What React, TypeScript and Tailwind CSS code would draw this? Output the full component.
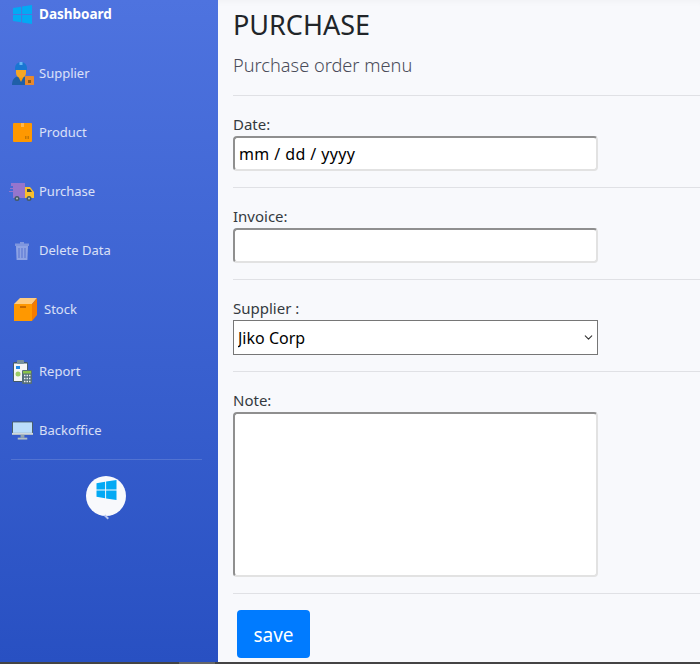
import { ChevronDown } from "lucide-react";

const sans = "font-['Noto_Sans','Liberation_Sans',sans-serif]";

function WinLogo({ className }: { className?: string }) {
  return (
    <svg viewBox="0 0 20 20" className={className} fill="#03a9f4">
      <path d="M0 3.2 8.6 1.8v7.6H0zM9.6 1.6 20 0v9.4H9.6zM0 10.4h8.6v7.8L0 16.8zM9.6 10.4H20V20L9.6 18.4z" />
    </svg>
  );
}

function SupplierIcon() {
  return (
    <svg viewBox="0 0 22 23" className="w-[22px] h-[23px]">
      <path d="M0 23c0-6 3-9 9-9s9 3 9 9z" fill="#1f5fa8" />
      <path d="M6 14h6l-3 6z" fill="#f59e0b" />
      <path d="M4 8h10v3a5 5 0 0 1-10 0z" fill="#f5a623" />
      <path d="M3 8V6a6 6 0 0 1 12 0v2z" fill="#1976d2" />
      <rect x="7.5" y="0" width="3" height="3" fill="#64b5f6" />
      <rect x="13" y="14" width="9" height="9" rx=".5" fill="#e8892c" />
      <rect x="16" y="18" width="3" height="3" fill="#8a5a1c" />
    </svg>
  );
}

function BoxIcon() {
  return (
    <svg viewBox="0 0 19 19" className="w-[19px] h-[19px]">
      <rect width="19" height="19" rx="1" fill="#ff9800" />
      <rect x="8" y="0" width="3" height="4" fill="#ffb74d" />
      <rect x="12" y="13" width="1.5" height="3" fill="#c77700" />
      <rect x="14.5" y="13" width="1.5" height="3" fill="#c77700" />
    </svg>
  );
}

function TruckIcon() {
  return (
    <svg viewBox="0 0 26 20" className="w-[26px] h-5">
      <path d="M2 1h14v15H4V10H0V9h4V7H1V6h3V4H2z" fill="#9575cd" />
      <path d="M16 5h5l4 5v6h-9z" fill="#fbc02d" />
      <path d="M18 7h3l2 3h-5z" fill="#37474f" />
      <circle cx="8" cy="16.5" r="2.5" fill="#455a64" />
      <circle cx="20" cy="16.5" r="2.5" fill="#455a64" />
      <circle cx="8" cy="16.5" r="1" fill="#b0bec5" />
      <circle cx="20" cy="16.5" r="1" fill="#b0bec5" />
    </svg>
  );
}

function TrashIcon() {
  return (
    <svg viewBox="0 0 14 18" className="w-3.5 h-[18px]">
      <path d="M5 0h4v1.5h5V4H0V1.5h5z" fill="#7f96de" />
      <path d="M1 4h12l-.6 14H1.6z" fill="#8ea3e4" />
      <path d="M4 6v10M7 6v10M10 6v10" stroke="#5f7bd4" strokeWidth="1.2" />
    </svg>
  );
}

function StockIcon() {
  return (
    <svg viewBox="0 0 23 23" className="w-[23px] h-[23px]">
      <path d="M0 6 6 0h17l-5 6z" fill="#ffcc80" />
      <rect y="6" width="18" height="17" fill="#ff9800" />
      <path d="M18 6l5-6v17l-5 6z" fill="#f57c00" />
      <rect x="6" y="8" width="6" height="2" fill="#c66900" />
    </svg>
  );
}

function ReportIcon() {
  return (
    <svg viewBox="0 0 19 24" className="w-[19px] h-6">
      <rect y="2" width="15" height="20" rx="1.5" fill="#455a64" />
      <rect x="1" y="3.5" width="13" height="17.5" fill="#f5f5f5" />
      <rect x="4" y="0" width="7" height="4" rx="1" fill="#78909c" />
      <rect x="3" y="6" width="4" height="3" fill="#1e88e5" />
      <circle cx="5" cy="14" r="2.5" fill="#9ccc65" />
      <rect x="9" y="10" width="10" height="14" rx="1" fill="#546e7a" />
      <rect x="10" y="11" width="8" height="2.5" fill="#8bc34a" />
      <path d="M11 15.5h1.5M13.5 15.5H15M16 15.5h1.5M11 18.5h1.5M13.5 18.5H15M16 18.5h1.5M11 21.5h1.5M13.5 21.5H15M16 21.5h1.5" stroke="#eceff1" strokeWidth="1.5" />
    </svg>
  );
}

function MonitorIcon() {
  return (
    <svg viewBox="0 0 22 19" className="w-[21px] h-[19px]">
      <rect width="22" height="14" rx="1" fill="#455a64" />
      <rect x="1" y="1" width="20" height="11" fill="#bbdefb" />
      <rect y="12" width="22" height="2" fill="#cfd8dc" />
      <rect x="9" y="14" width="4" height="3" fill="#90a4ae" />
      <rect x="6" y="17" width="10" height="2" fill="#b0bec5" />
    </svg>
  );
}

const navItems = [
  { label: "Dashboard", icon: <WinLogo className="w-[19px] h-[19px]" />, row: "h-[29px]", iconBox: "w-[39px] pr-[7px]", active: true },
  { label: "Supplier", icon: <SupplierIcon />, row: "h-[59px] mt-[15px]", iconBox: "w-[39px] pr-[5px]" },
  { label: "Product", icon: <BoxIcon />, row: "h-[59px]", iconBox: "w-[39px] pr-[7px]" },
  { label: "Purchase", icon: <TruckIcon />, row: "h-[59px]", iconBox: "w-[39px] pr-1" },
  { label: "Delete Data", icon: <TrashIcon />, row: "h-[59px]", iconBox: "w-[39px] pr-2.5" },
  { label: "Stock", icon: <StockIcon />, row: "h-[59px]", iconBox: "w-[44px] pr-[7px]" },
  { label: "Report", icon: <ReportIcon />, row: "h-[59px] mt-[3px]", iconBox: "w-[39px] pr-[7px]" },
  { label: "Backoffice", icon: <MonitorIcon />, row: "h-[59px] mb-[-1px]", iconBox: "w-[39px] pr-1.5" },
];

function Sidebar() {
  return (
    <aside className="w-[218px] shrink-0 bg-gradient-to-b from-[#4e73df] to-[#2850c2] flex flex-col">
      <nav className="flex flex-col">
        {navItems.map((item) => (
          <a key={item.label} className={`flex items-center ${item.row}`}>
            <span className={`${item.iconBox} shrink-0 flex justify-end`}>{item.icon}</span>
            <span className={item.active ? "text-[13.5px] font-bold text-white" : "text-[13px] text-white/80"}>
              {item.label}
            </span>
          </a>
        ))}
      </nav>
      <div className="ml-[11px] mr-4">
        <hr className="border-0 border-t border-white/15" />
        <div className="flex justify-center mt-4 pr-0.5">
          <div className="relative w-10 h-10 rounded-full bg-[#f8f9fc] flex justify-center pt-1 pl-0.5">
            <WinLogo className="w-[21px] h-5" />
            <span className="absolute left-[18px] top-[40px] w-[5px] h-[2px] rotate-45 bg-[#b9c6ee]" />
          </div>
        </div>
      </div>
    </aside>
  );
}

const fieldBorder = "border-2 border-t-[#8f8f8f] border-l-[#8f8f8f] border-r-[#e2e2e2] border-b-[#e2e2e2] rounded-[4px] bg-white";

function Field({ label, children }: { label: string; children: React.ReactNode }) {
  return (
    <div className="flex flex-col mt-[18px]">
      <label className="text-[15px] leading-[20px] pb-0.5 text-[#343a40]">{label}</label>
      {children}
    </div>
  );
}

export default function App() {
  return (
    <div className={`h-[664px] w-[700px] overflow-hidden flex flex-col ${sans}`}>
      <div className="flex h-[662px]">
        <Sidebar />
        <main className="flex-1 bg-[#f8f9fc] shadow-[inset_0_6px_6px_-4px_rgba(0,0,0,0.03)] pl-[15px] flex flex-col">
          <h1 className="text-[27px] leading-[36px] mt-[7px] text-[#212529]">PURCHASE</h1>
          <p className="text-[18.2px] leading-[26px] mt-[9px] font-light text-[#4a4c59]">Purchase order menu</p>
          <hr className="mt-[17px] border-0 border-t border-[#e0e1e5]" />
          <Field label="Date:">
            <input
              type="text"
              readOnly
              defaultValue="mm / dd / yyyy"
              className={`w-[365px] h-[35px] px-1 text-[16px] tracking-[0.4px] text-black outline-none ${fieldBorder}`}
            />
          </Field>
          <hr className="mt-4 border-0 border-t border-[#e0e1e5]" />
          <Field label="Invoice:">
            <input type="text" className={`w-[365px] h-[35px] px-1 outline-none ${fieldBorder}`} />
          </Field>
          <hr className="mt-4 border-0 border-t border-[#e0e1e5]" />
          <Field label="Supplier :">
            <div className="relative w-[365px]">
              <select className="block w-full h-[35px] px-1 text-[16px] text-black bg-white border border-[#767676] rounded-none outline-none appearance-none">
                <option>Jiko Corp</option>
              </select>
              <ChevronDown className="absolute right-[3px] top-[11px] w-[13px] h-[13px] text-[#333]" strokeWidth={2} />
            </div>
          </Field>
          <hr className="mt-4 border-0 border-t border-[#e0e1e5]" />
          <Field label="Note:">
            <textarea className={`block w-[365px] h-[165px] resize-none outline-none ${fieldBorder}`} />
          </Field>
          <hr className="mt-4 border-0 border-t border-[#e0e1e5]" />
          <button className="mt-4 ml-1 w-[73px] h-12 pt-0.5 rounded-[4px] bg-[#007bff] text-white text-[19px]">save</button>
        </main>
      </div>
      <div className="h-[2px] flex bg-[#444]">
        <div className="w-[179px]" />
        <div className="w-9 bg-[#666]" />
      </div>
    </div>
  );
}
